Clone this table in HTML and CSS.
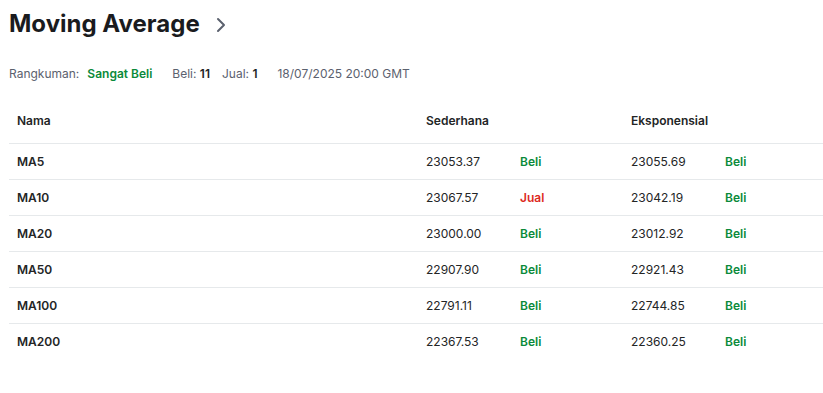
FILE: index.html
```html
<!DOCTYPE html>
<html lang="id">
<head>
<meta charset="utf-8">
<link rel="stylesheet" href="styles.css">
</head>
<body>
<div class="page">
  <h2 class="title">Moving Average
    <svg class="chev" width="10" height="16" viewBox="0 0 10 16"><path d="M2 2l6 6-6 6" fill="none" stroke="#5b616e" stroke-width="2" stroke-linecap="round" stroke-linejoin="round"/></svg>
  </h2>
  <div class="summary">
    <span class="lbl">Rangkuman:</span><span class="buy strong">Sangat Beli</span>
    <span class="lbl s-buy">Beli: <b>11</b></span>
    <span class="lbl s-sell">Jual: <b>1</b></span>
    <span class="lbl s-date">18/07/2025 20:00 GMT</span>
  </div>
  <div class="table">
    <div class="row head">
      <div class="c">Nama</div><div class="c">Sederhana</div><div class="c"></div><div class="c">Eksponensial</div><div class="c"></div>
    </div>
    <div class="row"><div class="c name">MA5</div><div class="c">23053.37</div><div class="c buy">Beli</div><div class="c">23055.69</div><div class="c buy">Beli</div></div>
    <div class="row"><div class="c name">MA10</div><div class="c">23067.57</div><div class="c sell">Jual</div><div class="c">23042.19</div><div class="c buy">Beli</div></div>
    <div class="row"><div class="c name">MA20</div><div class="c">23000.00</div><div class="c buy">Beli</div><div class="c">23012.92</div><div class="c buy">Beli</div></div>
    <div class="row"><div class="c name">MA50</div><div class="c">22907.90</div><div class="c buy">Beli</div><div class="c">22921.43</div><div class="c buy">Beli</div></div>
    <div class="row"><div class="c name">MA100</div><div class="c">22791.11</div><div class="c buy">Beli</div><div class="c">22744.85</div><div class="c buy">Beli</div></div>
    <div class="row last"><div class="c name">MA200</div><div class="c">22367.53</div><div class="c buy">Beli</div><div class="c">22360.25</div><div class="c buy">Beli</div></div>
  </div>
</div>
</body>
</html>
```
FILE: styles.css
```css
* { box-sizing: border-box; }
html, body { margin: 0; padding: 0; background: #fff; }
body { font-family: Inter, "Noto Sans", sans-serif; color: #232526; }
.page { padding: 8px 0 0 9px; }
.title {
  margin: 0;
  font-size: 24px;
  font-weight: 700;
  line-height: 32px;
  display: flex;
  align-items: center;
  gap: 16px;
  color: #1a1b1e;
}
.chev { margin-top: 1px; }
.summary {
  margin-top: 25px;
  font-size: 12px;
  line-height: 18px;
  display: flex;
  align-items: center;
}
.lbl { color: #5b616e; }
.lbl b { color: #232526; font-weight: 600; }
.summary .strong { font-weight: 600; margin-left: 8px; }
.summary .s-buy { margin-left: 20px; }
.summary .s-sell { margin-left: 12px; }
.summary .s-date { margin-left: 20px; }
.table { margin-top: 18px; }
.row {
  display: grid;
  grid-template-columns: 409px 94px 111px 94px 1fr;
  height: 36px;
  align-items: center;
  border-top: 1px solid #e6e9eb;
  font-size: 12px;
}
.row.head { border-top: none; height: 42px; padding-bottom: 4px; font-weight: 600; }
.c { padding-left: 8px; }
.name { font-weight: 600; }
.buy { color: #0a8a3a; font-weight: 600; }
.sell { color: #dd2a1f; font-weight: 600; }
```
